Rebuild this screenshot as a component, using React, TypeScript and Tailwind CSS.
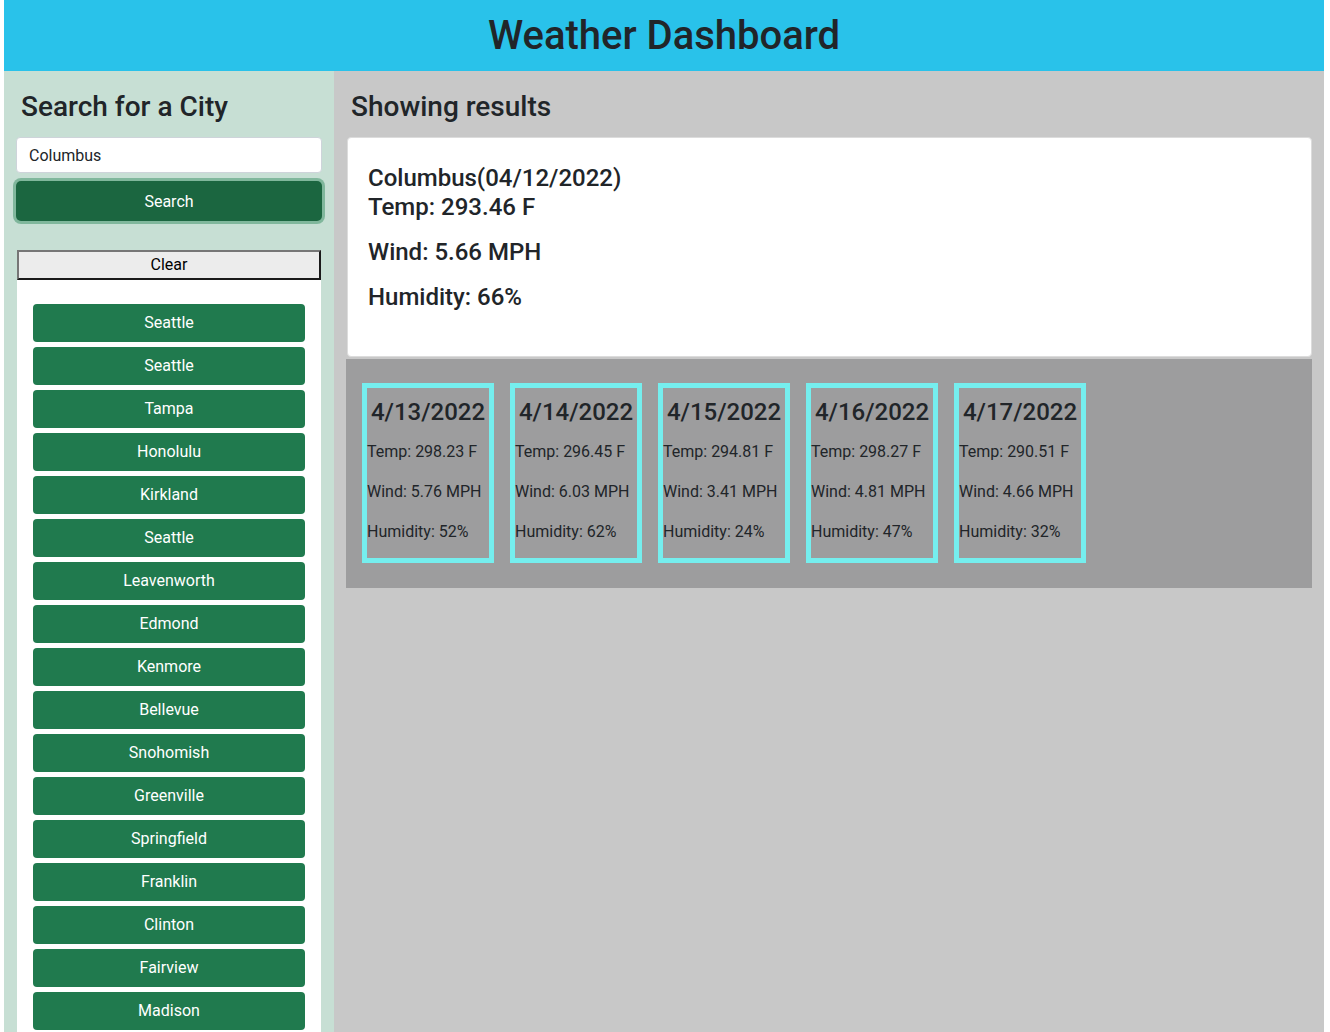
import React from "react";

const cities = [
  "Seattle",
  "Seattle",
  "Tampa",
  "Honolulu",
  "Kirkland",
  "Seattle",
  "Leavenworth",
  "Edmond",
  "Kenmore",
  "Bellevue",
  "Snohomish",
  "Greenville",
  "Springfield",
  "Franklin",
  "Clinton",
  "Fairview",
  "Madison",
];

const forecast = [
  { date: "4/13/2022", temp: "298.23", wind: "5.76", humidity: "52" },
  { date: "4/14/2022", temp: "296.45", wind: "6.03", humidity: "62" },
  { date: "4/15/2022", temp: "294.81", wind: "3.41", humidity: "24" },
  { date: "4/16/2022", temp: "298.27", wind: "4.81", humidity: "47" },
  { date: "4/17/2022", temp: "290.51", wind: "4.66", humidity: "32" },
];

const App = () => {
  return (
    <div className="ml-[4px] mr-[6px] font-['Roboto','Noto_Sans',sans-serif] text-[#212529]">
      <header className="flex h-[71px] items-center justify-center bg-[#29c2ea]">
        <h1 className="text-[40px] font-medium leading-[48px]">
          Weather Dashboard
        </h1>
      </header>

      <div className="flex">
        <aside className="w-[330px] shrink-0 bg-[#c7dfd4] px-[12px] pt-[19px]">
          <h3 className="mb-[13px] pl-[5px] text-[28px] font-medium leading-[34px]">
            Search for a City
          </h3>
          <input
            className="block h-[36px] w-full rounded-[4px] border border-[#ced4da] bg-white px-[12px] text-[16px] outline-none"
            defaultValue="Columbus"
          />
          <button className="mt-[8px] block h-[40px] w-full rounded-[5px] bg-[#1b6640] pt-[1px] text-[16px] text-white shadow-[0_0_0_3px_#80b79c]">
            Search
          </button>
          <div className="mx-[1px] mt-[29px]">
            <button className="block h-[30px] w-full border-2 border-t-[#767676] border-l-[#767676] border-r-[#1a1a1a] border-b-[#1a1a1a] bg-[#ececec] text-[16px] text-black">
              Clear
            </button>
            <ul className="flex flex-col gap-[5px] bg-white px-[16px] pt-[24px] pb-[16px]">
              {cities.map((city, i) => (
                <li key={i}>
                  <button className="block h-[38px] w-full rounded-[4px] bg-[#207a4e] text-[16px] text-white">
                    {city}
                  </button>
                </li>
              ))}
            </ul>
          </div>
        </aside>

        <main className="flex-1 bg-[#c8c8c8] px-[12px] pt-[19px]">
          <h3 className="mb-[13px] pl-[5px] text-[28px] font-medium leading-[34px]">
            Showing results
          </h3>
          <div className="ml-[1px] rounded-[4px] border border-[#dcdcdc] bg-white px-[20px] pt-[26px] pb-[44px]">
            <h4 className="text-[24px] font-medium leading-[29px]">
              Columbus(04/12/2022)
            </h4>
            <p className="text-[24px] font-medium leading-[29px]">Temp: 293.46 F</p>
            <p className="mt-[16px] text-[24px] font-medium leading-[29px]">
              Wind: 5.66 MPH
            </p>
            <p className="mt-[16px] text-[24px] font-medium leading-[29px]">
              Humidity: 66%
            </p>
          </div>
          <div className="mt-[2px] flex gap-[16px] bg-[#9d9d9e] px-[16px] pt-[24px] pb-[25px]">
            {forecast.map((day) => (
              <div
                key={day.date}
                className="w-[132px] border-[5px] border-[#75eeee]"
              >
                <h4 className="pt-[10px] pb-[13px] text-center text-[24px] font-medium leading-[29px]">
                  {day.date}
                </h4>
                <p className="mb-[16px] whitespace-nowrap text-[16px] leading-[24px]">
                  Temp: {day.temp} F
                </p>
                <p className="mb-[16px] whitespace-nowrap text-[16px] leading-[24px]">
                  Wind: {day.wind} MPH
                </p>
                <p className="mb-[14px] whitespace-nowrap text-[16px] leading-[24px]">
                  Humidity: {day.humidity}%
                </p>
              </div>
            ))}
          </div>
        </main>
      </div>
    </div>
  );
};

export default App;
